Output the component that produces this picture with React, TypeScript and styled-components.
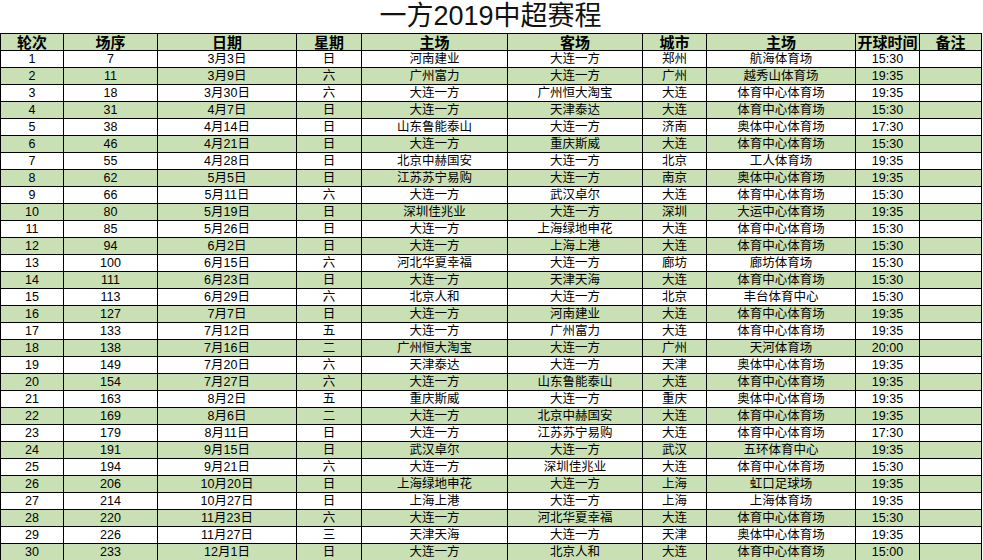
import styled, { createGlobalStyle } from 'styled-components'

const GlobalStyle = createGlobalStyle`
  html, body {
    margin: 0;
    padding: 0;
    background: #fff;
  }
  body {
    font-family: "Liberation Sans", "Noto Sans CJK SC", sans-serif;
    color: #000;
  }
`

const columns = [
  { label: '轮次', width: 63 },
  { label: '场序', width: 94 },
  { label: '日期', width: 139 },
  { label: '星期', width: 65 },
  { label: '主场', width: 146 },
  { label: '客场', width: 135 },
  { label: '城市', width: 64 },
  { label: '主场', width: 149 },
  { label: '开球时间', width: 64 },
  { label: '备注', width: 62 },
]

const raw = `1,7,3月3日,日,河南建业,大连一方,郑州,航海体育场,15:30
2,11,3月9日,六,广州富力,大连一方,广州,越秀山体育场,19:35
3,18,3月30日,六,大连一方,广州恒大淘宝,大连,体育中心体育场,19:35
4,31,4月7日,日,大连一方,天津泰达,大连,体育中心体育场,15:30
5,38,4月14日,日,山东鲁能泰山,大连一方,济南,奥体中心体育场,17:30
6,46,4月21日,日,大连一方,重庆斯威,大连,体育中心体育场,15:30
7,55,4月28日,日,北京中赫国安,大连一方,北京,工人体育场,19:35
8,62,5月5日,日,江苏苏宁易购,大连一方,南京,奥体中心体育场,19:35
9,66,5月11日,六,大连一方,武汉卓尔,大连,体育中心体育场,15:30
10,80,5月19日,日,深圳佳兆业,大连一方,深圳,大运中心体育场,19:35
11,85,5月26日,日,大连一方,上海绿地申花,大连,体育中心体育场,15:30
12,94,6月2日,日,大连一方,上海上港,大连,体育中心体育场,15:30
13,100,6月15日,六,河北华夏幸福,大连一方,廊坊,廊坊体育场,15:30
14,111,6月23日,日,大连一方,天津天海,大连,体育中心体育场,15:30
15,113,6月29日,六,北京人和,大连一方,北京,丰台体育中心,15:30
16,127,7月7日,日,大连一方,河南建业,大连,体育中心体育场,19:35
17,133,7月12日,五,大连一方,广州富力,大连,体育中心体育场,19:35
18,138,7月16日,二,广州恒大淘宝,大连一方,广州,天河体育场,20:00
19,149,7月20日,六,天津泰达,大连一方,天津,奥体中心体育场,19:35
20,154,7月27日,六,大连一方,山东鲁能泰山,大连,体育中心体育场,19:35
21,163,8月2日,五,重庆斯威,大连一方,重庆,奥体中心体育场,19:35
22,169,8月6日,二,大连一方,北京中赫国安,大连,体育中心体育场,19:35
23,179,8月11日,日,大连一方,江苏苏宁易购,大连,体育中心体育场,17:30
24,191,9月15日,日,武汉卓尔,大连一方,武汉,五环体育中心,19:35
25,194,9月21日,六,大连一方,深圳佳兆业,大连,体育中心体育场,15:30
26,206,10月20日,日,上海绿地申花,大连一方,上海,虹口足球场,19:35
27,214,10月27日,日,上海上港,大连一方,上海,上海体育场,19:35
28,220,11月23日,六,大连一方,河北华夏幸福,大连,体育中心体育场,15:30
29,226,11月27日,三,天津天海,大连一方,天津,奥体中心体育场,19:35
30,233,12月1日,日,大连一方,北京人和,大连,体育中心体育场,15:00`

const matches = raw.split('\n').map((line) => [...line.split(','), ''])

const Sheet = styled.div`
  width: 983px;
  height: 560px;
  overflow: hidden;
`

const Title = styled.h1`
  margin: 0;
  width: 981px;
  height: 33px;
  text-align: center;
  font-weight: normal;
  font-size: 27px;
  line-height: 33px;
  color: #111;
  overflow: hidden;
`

const Table = styled.table`
  border-collapse: collapse;
  table-layout: fixed;
  width: 981px;
  border: 1px solid #000;
`

const HeadCell = styled.th`
  background: #c8e0b4;
  border: 1px solid #000;
  padding: 0;
  height: 16px;
  font-size: 15px;
  line-height: 16px;
  font-weight: bold;
  text-align: center;
  white-space: nowrap;
  font-family: "Noto Sans CJK SC", sans-serif;
`

const Row = styled.tr<{ $shaded: boolean }>`
  background: ${(p) => (p.$shaded ? '#c8e0b4' : '#ffffff')};
`

const Cell = styled.td`
  border: 1px solid #000;
  padding: 0;
  height: 16px;
  font-size: 12.5px;
  line-height: 16px;
  text-align: center;
  white-space: nowrap;
`

export default function App() {
  return (
    <Sheet>
      <GlobalStyle />
      <Title>一方2019中超赛程</Title>
      <Table>
        <colgroup>
          {columns.map((c, i) => (
            <col key={i} style={{ width: c.width }} />
          ))}
        </colgroup>
        <thead>
          <tr>
            {columns.map((c, i) => (
              <HeadCell key={i}>{c.label}</HeadCell>
            ))}
          </tr>
        </thead>
        <tbody>
          {matches.map((m, r) => (
            <Row key={r} $shaded={r % 2 === 1}>
              {m.map((v, i) => (
                <Cell key={i}>{v}</Cell>
              ))}
            </Row>
          ))}
        </tbody>
      </Table>
    </Sheet>
  )
}
